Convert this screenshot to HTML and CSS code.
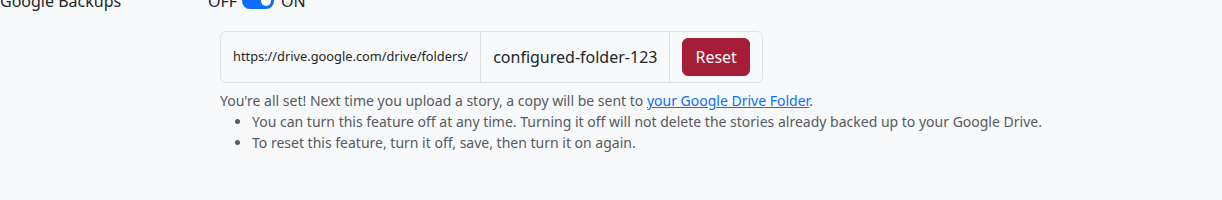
FILE: index.html
```html
<!DOCTYPE html>
<html lang="en">
<head>
    <meta charset="UTF-8">
    <title>Google Backups</title>
    <link rel="stylesheet" href="styles.css">
</head>
<body>
  <div class="settings">
    <div class="setting-row">
      <label class="setting-label">Google Backups</label>
      <div class="setting-body">
        <div class="toggle">
          <span class="toggle-text">OFF</span>
          <span class="switch on"><span class="knob"></span></span>
          <span class="toggle-text">ON</span>
        </div>
        <div class="backup-box">
          <div class="folder-group">
            <span class="folder-prefix">https://drive.google.com/drive/folders/</span>
            <span class="folder-id">configured-folder-123</span>
            <span class="folder-action"><button class="btn-reset" type="button">Reset</button></span>
          </div>
          <div class="help">
            You're all set! Next time you upload a story, a copy will be sent to <a href="#">your Google Drive Folder</a>.
            <ul>
              <li>You can turn this feature off at any time. Turning it off will not delete the stories already backed up to your Google Drive.</li>
              <li>To reset this feature, turn it off, save, then turn it on again.</li>
            </ul>
          </div>
        </div>
      </div>
    </div>
  </div>
</body>
</html>
```

FILE: styles.css
```css
html, body {
    margin: 0;
    background-color: #f8f9fa;
}
body {
    font-family: "Noto Sans", "Liberation Sans", sans-serif;
    font-size: 16px;
    line-height: 1.5;
    color: #212529;
}
.settings {
    margin-top: -11px;
}
.setting-row {
    display: flex;
}
.setting-label {
    width: 208px;
    flex-shrink: 0;
}
.setting-body {
    flex: 1;
}
.toggle {
    display: flex;
    align-items: center;
    gap: 5px;
}
.toggle-text {
    color: #212529;
}
.switch {
    position: relative;
    display: inline-block;
    width: 32px;
    height: 16px;
    border-radius: 8px;
    background-color: #0d6efd;
    margin-right: 2px;
}
.switch .knob {
    position: absolute;
    top: 3px;
    right: 3px;
    width: 10px;
    height: 10px;
    border-radius: 50%;
    background-color: #fff;
}
.backup-box {
    margin-left: 12px;
    margin-top: 18px;
}
.folder-group {
    display: inline-flex;
    align-items: stretch;
    border: 1px solid #dee2e6;
    border-radius: 6px;
    background-color: #f8f9fa;
}
.folder-prefix {
    display: flex;
    align-items: center;
    padding: 0 12px;
    font-size: 12.8px;
    border-right: 1px solid #dee2e6;
}
.folder-id {
    display: flex;
    align-items: center;
    padding: 0 12px;
    border-right: 1px solid #dee2e6;
}
.folder-action {
    padding: 6px 12px;
}
.btn-reset {
    font-family: inherit;
    font-size: 16px;
    line-height: 1.5;
    color: #fff;
    background-color: #a51d36;
    border: 1px solid #a51d36;
    border-radius: 6px;
    padding: 6px 12px;
}
.help {
    margin-top: 7px;
    font-size: 14px;
    color: #555a60;
}
.help a {
    color: #0d6efd;
}
.help ul {
    margin: 0;
    padding-left: 32px;
}
```
